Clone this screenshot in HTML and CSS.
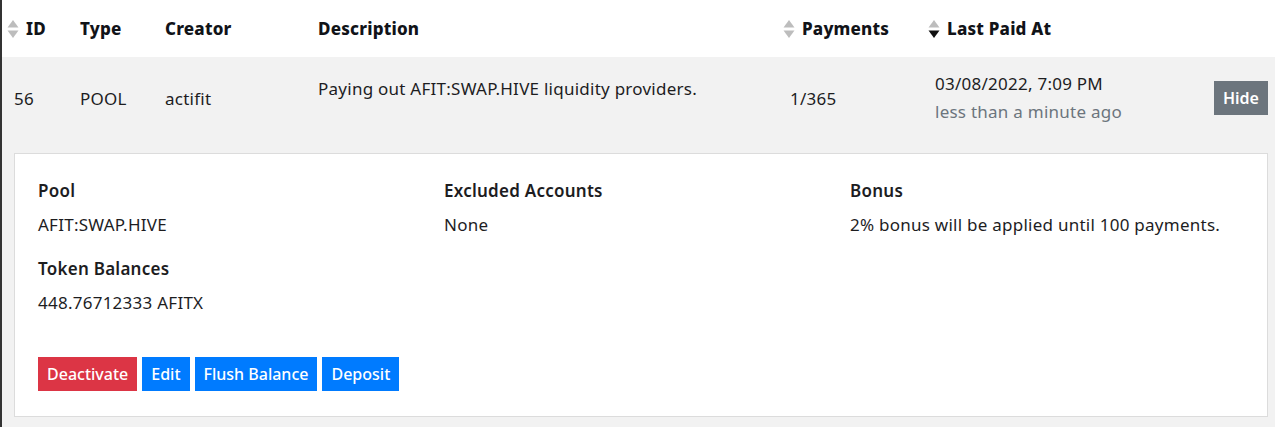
FILE: index.html
```html
<!DOCTYPE html>
<html>
<head>
<meta charset="utf-8">
<link rel="stylesheet" href="styles.css">
</head>
<body>
<div class="frame">
  <table class="grid">
    <colgroup>
      <col class="c-id"><col class="c-type"><col class="c-creator"><col class="c-desc"><col class="c-pay"><col class="c-last"><col class="c-act">
    </colgroup>
    <thead>
      <tr>
        <th class="sortable"><span class="sort"><svg width="12" height="20" viewBox="0 0 12 20"><path d="M6 1 L11.5 8.5 H0.5 Z" fill="#bdbdbd"/><path d="M6 19 L11.5 11.5 H0.5 Z" fill="#bdbdbd"/></svg></span>ID</th>
        <th>Type</th>
        <th>Creator</th>
        <th>Description</th>
        <th class="sortable"><span class="sort"><svg width="12" height="20" viewBox="0 0 12 20"><path d="M6 1 L11.5 8.5 H0.5 Z" fill="#bdbdbd"/><path d="M6 19 L11.5 11.5 H0.5 Z" fill="#bdbdbd"/></svg></span>Payments</th>
        <th class="sortable"><span class="sort"><svg width="12" height="20" viewBox="0 0 12 20"><path d="M6 1 L11.5 8.5 H0.5 Z" fill="#bdbdbd"/><path d="M6 19 L11.5 11.5 H0.5 Z" fill="#111"/></svg></span>Last Paid At</th>
        <th></th>
      </tr>
    </thead>
    <tbody>
      <tr class="main-row">
        <td>56</td>
        <td>POOL</td>
        <td>actifit</td>
        <td><p class="desc">Paying out AFIT:SWAP.HIVE liquidity providers.</p></td>
        <td>1/365</td>
        <td><div class="date">03/08/2022, 7:09 PM</div><div class="ago">less than a minute ago</div></td>
        <td><button class="btn btn-grey">Hide</button></td>
      </tr>
      <tr class="detail-row">
        <td colspan="7">
          <div class="card">
            <div class="info">
              <div class="field">
                <div class="label">Pool</div>
                <div class="value">AFIT:SWAP.HIVE</div>
              </div>
              <div class="field">
                <div class="label">Excluded Accounts</div>
                <div class="value">None</div>
              </div>
              <div class="field">
                <div class="label">Bonus</div>
                <div class="value">2% bonus will be applied until 100 payments.</div>
              </div>
              <div class="field">
                <div class="label">Token Balances</div>
                <div class="value">448.76712333 AFITX</div>
              </div>
            </div>
            <div class="actions">
              <button class="btn btn-red">Deactivate</button>
              <button class="btn btn-blue">Edit</button>
              <button class="btn btn-blue">Flush Balance</button>
              <button class="btn btn-blue">Deposit</button>
            </div>
          </div>
        </td>
      </tr>
    </tbody>
  </table>
</div>
</body>
</html>
```
FILE: styles.css
```css
html, body {
  margin: 0;
  padding: 0;
  background: #fff;
}
body {
  font-family: "Noto Sans", "Open Sans", sans-serif;
  color: #1d1d1f;
  font-size: 17px;
  letter-spacing: 0.25px;
}
.frame {
  border-left: 2px solid #333;
  width: 1273px;
  height: 427px;
  overflow: hidden;
}
.grid {
  width: 1273px;
  table-layout: fixed;
  border-collapse: collapse;
}
.c-id { width: 66px; }
.c-type { width: 85px; }
.c-creator { width: 153px; }
.c-desc { width: 472px; }
.c-pay { width: 145px; }
.c-last { width: 279px; }
.c-act { width: 73px; }

th {
  height: 57px;
  padding: 0 12px;
  text-align: left;
  font-weight: 800;
  font-size: 17px;
  letter-spacing: 0.2px;
  color: #111318;
  position: relative;
  vertical-align: middle;
}
th.sortable { padding-left: 24px; }
.sort {
  position: absolute;
  left: 5px;
  top: 19px;
  line-height: 0;
}
td {
  padding: 0 12px;
  vertical-align: middle;
}
.main-row { background: #f2f2f2; }
.main-row td { height: 82px; }
.desc { margin: 0 0 20px; }
.date { line-height: 28px; }
.ago { color: #6c757d; line-height: 28px; }
.detail-row { background: #f2f2f2; }
.detail-row td { padding: 14px 7px 11px 12px; }
.card {
  background: #fff;
  border: 1px solid #dcdcdc;
  height: 264px;
  box-sizing: border-box;
  padding: 25px 23px 24px;
  display: flex;
  flex-direction: column;
}
.info {
  display: grid;
  grid-template-columns: 406px 406px 1fr;
  row-gap: 20px;
}
.label {
  font-weight: 600;
  line-height: 24px;
}
.value {
  margin-top: 10px;
  line-height: 24px;
}
.actions {
  margin-top: 42px;
  display: flex;
  gap: 5px;
}
.btn {
  font-family: inherit;
  font-size: 16px;
  font-weight: 500;
  letter-spacing: 0;
  color: #fff;
  border: none;
  border-radius: 0;
  height: 34px;
  padding: 0 9px;
  line-height: 34px;
}
.btn-red { background: #dc3545; }
.btn-blue { background: #007bff; }
.btn-grey { background: #6c757d; padding: 0; font-weight: 600; width: 54px; }
```
